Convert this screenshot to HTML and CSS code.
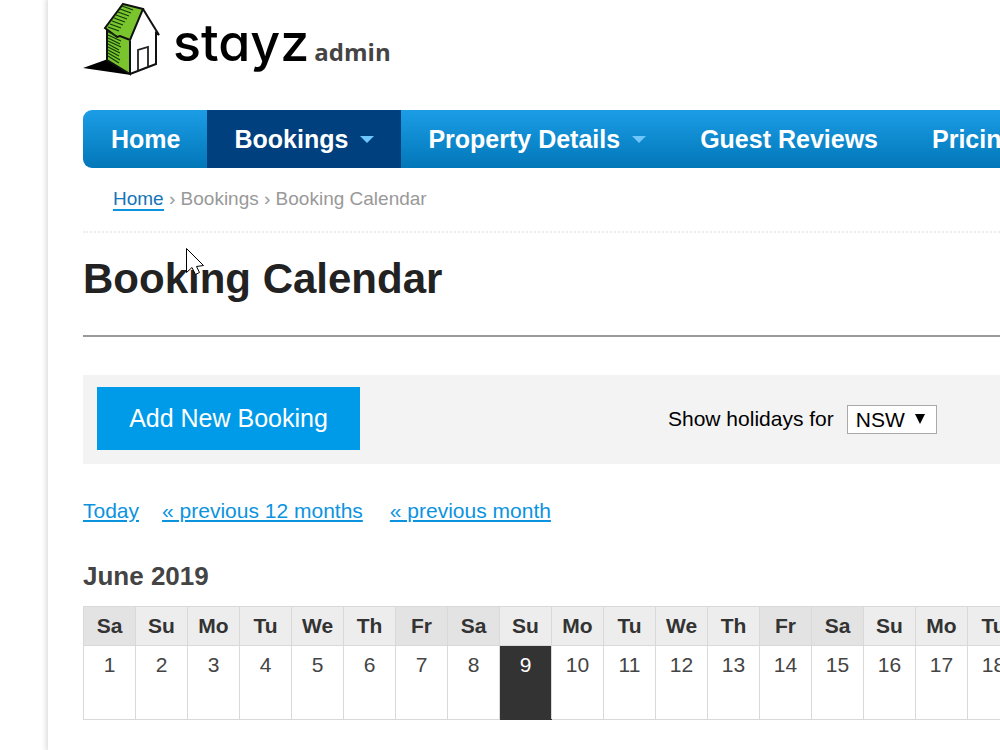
FILE: index.html
```html
<!DOCTYPE html>
<html lang="en">
<head>
<meta charset="utf-8">
<title>Booking Calendar - stayz admin</title>
<link rel="stylesheet" href="styles.css">
</head>
<body>
<div class="page">
  <header class="brand">
    <svg class="house" viewBox="0 0 78 76" width="78" height="76" aria-hidden="true">
      <path d="M0 68 L25 59 L48 75 Z" fill="#000"/>
      <path d="M60 9 L77 35 L74 34 V64 L47 74 L46 40 Z" fill="#fff"/>
      <path d="M24 29 L47 41 L47 74 L24 60 Z" fill="#7ac52e"/>
      <path d="M40 4 L60 9 L47 40 L37 36 L34 37 L22 28 Z" fill="#7ac52e" stroke="#111" stroke-width="2"/>
      <path d="M24 30 V60 L47 74 V41 M47 74 L73 64 V33 L76 35 L60 9" fill="none" stroke="#111" stroke-width="2"/>
      <path d="M55 70 V50 L65 47 V66" fill="none" stroke="#222" stroke-width="1.8"/>
      <path d="M39 6 l11 4 M37 9 l11 4 M35 12 l11 4 M33 15 l11 4 M31 18 l11 4 M29 21 l11 4 M27 24 l11 4 M25 27 l11 4 M25 32 l9 4 M25 35 l13 6 M25 38 l12 6 M25 41 l13 6 M25 44 l11 6 M25 47 l12 6 M25 50 l11 6 M25 53 l12 7 M25 56 l11 7" fill="none" stroke="#123a08" stroke-width="1.2"/>
    </svg>
    <span class="brand-name">stayz</span>
    <span class="brand-sub">admin</span>
  </header>

  <nav class="menu">
    <a href="#">Home</a>
    <a href="#" class="active">Bookings<span class="caret"></span></a>
    <a href="#">Property Details<span class="caret"></span></a>
    <a href="#">Guest Reviews</a>
    <a href="#">Pricing</a>
  </nav>

  <div class="crumbs"><a href="#">Home</a> › Bookings › Booking Calendar</div>

  <h1>Booking Calendar</h1>

  <div class="toolbar">
    <button type="button" class="add">Add New Booking</button>
    <label for="state">Show holidays for</label>
    <div class="select">
      <select id="state"><option>NSW</option></select>
      <svg class="arrow" viewBox="0 0 10 10" width="10" height="10" aria-hidden="true"><path d="M0 0H10L5 10Z"/></svg>
    </div>
  </div>

  <div class="pager">
    <a href="#">Today</a>
    <a href="#">« previous 12 months</a>
    <a href="#" class="month">« previous month</a>
  </div>

  <h2>June 2019</h2>
  <table class="calendar">
    <thead>
      <tr><th class="end">Sa</th><th>Su</th><th>Mo</th><th>Tu</th><th>We</th><th>Th</th><th class="end">Fr</th><th class="end">Sa</th><th>Su</th><th>Mo</th><th>Tu</th><th>We</th><th>Th</th><th class="end">Fr</th><th class="end">Sa</th><th>Su</th><th>Mo</th><th>Tu</th></tr>
    </thead>
    <tbody>
      <tr><td>1</td><td>2</td><td>3</td><td>4</td><td>5</td><td>6</td><td>7</td><td>8</td><td class="today">9</td><td>10</td><td>11</td><td>12</td><td>13</td><td>14</td><td>15</td><td>16</td><td>17</td><td>18</td></tr>
    </tbody>
  </table>
</div>
<svg class="pointer" viewBox="0 0 20 28" width="20" height="28" aria-hidden="true"><path d="M.5 .5V24.500L6 19.500L9.500 26.500L13.500 24.500L10.500 18.500L17.500 17.500Z" fill="#fff" stroke="#000"/></svg>
</body>
</html>
```

FILE: styles.css
```css
* { box-sizing: border-box; }

body {
  margin: 0;
  background: #fff;
  color: #333;
  font-family: "Liberation Sans", Arial, sans-serif;
  font-size: 21px;
  line-height: 24px;
  overflow: hidden;
}

a { color: #0b93e0; }

.page {
  min-height: 100vh;
  margin-left: 48px;
  padding-left: 35px;
  box-shadow: 0 0 5px 2px #ddd;
  overflow: hidden;
  clip-path: inset(0 0 0 -8px);
}

.brand {
  display: flex;
  align-items: baseline;
  height: 110px;
}

.house { align-self: flex-start; overflow: visible; }

.brand-name {
  margin-left: 12px;
  color: #000;
  font-family: Inter, sans-serif;
  font-feature-settings: "cv11";
  font-size: 52px;
  font-weight: 500;
  line-height: 86px;
}

.brand-sub {
  margin-left: 5px;
  color: #444;
  font-family: "Open Sans", sans-serif;
  font-size: 24px;
  font-weight: 700;
}

.menu {
  display: flex;
  height: 58px;
  padding-left: 1px;
  border-radius: 9px 0 0 9px;
  background: linear-gradient(#1b9de6, #0277b8);
  overflow: hidden;
}

.menu a {
  display: flex;
  flex: none;
  align-items: center;
  padding: 0 27px;
  color: #fff;
  font-size: 25px;
  font-weight: 700;
  text-decoration: none;
}

.menu .active { background: #00407e; }

.caret {
  margin-left: 12px;
  border: 7px solid transparent;
  border-top-color: #6fc6fa;
  border-bottom: 0;
}

.crumbs {
  height: 65px;
  padding: 19px 30px 0;
  border-bottom: 2px dotted #eee;
  color: #999;
  font-size: 19px;
}

.crumbs a {
  border-bottom: 2px solid #0b93e0;
  color: #1474b8;
  text-decoration: none;
}

h1 {
  margin: 0;
  padding: 20px 0 31px;
  border-bottom: 2px solid #999;
  color: #222;
  font-size: 42px;
  line-height: 51px;
}

.toolbar {
  display: flex;
  align-items: center;
  margin-top: 38px;
  padding: 12px 14px 14px;
  background: #f3f3f3;
  color: #000;
}

.add {
  width: 263px;
  height: 63px;
  padding: 0;
  border: 0;
  background: #009be8;
  color: #fff;
  font: 25px "Liberation Sans", Arial, sans-serif;
}

.toolbar label { margin-left: 308px; }

.select { position: relative; margin: 2px 0 0 13px; }

.select select {
  width: 90px;
  height: 29px;
  padding: 0 8px;
  border: 1px solid #a9a9a9;
  border-radius: 0;
  background: #fff;
  color: #000;
  font: 21px "Liberation Sans", Arial, sans-serif;
  appearance: none;
}

.arrow { position: absolute; top: 9px; right: 12px; pointer-events: none; }

.pager {
  display: flex;
  gap: 23px;
  margin-top: 35px;
}

.pager a {
  text-decoration-thickness: 2px;
  text-underline-offset: 2px;
}

.pager .month { margin-left: 4px; }

h2 {
  margin: 38px 0 15px;
  color: #444;
  font-size: 26px;
  line-height: 30px;
}

.calendar {
  width: 937px;
  table-layout: fixed;
  border-collapse: collapse;
}

.calendar th, .calendar td {
  padding: 0;
  border: 1px solid #d9d9d9;
  text-align: center;
}

.calendar th { height: 39px; background: #ededed; }
.calendar .end { background: #e3e3e3; }
.calendar td { height: 74px; padding-top: 7px; color: #444; vertical-align: top; }
.calendar .today { border-bottom-color: #333; background: #333; color: #fff; }

.pointer { position: absolute; top: 248px; left: 186px; }
```
